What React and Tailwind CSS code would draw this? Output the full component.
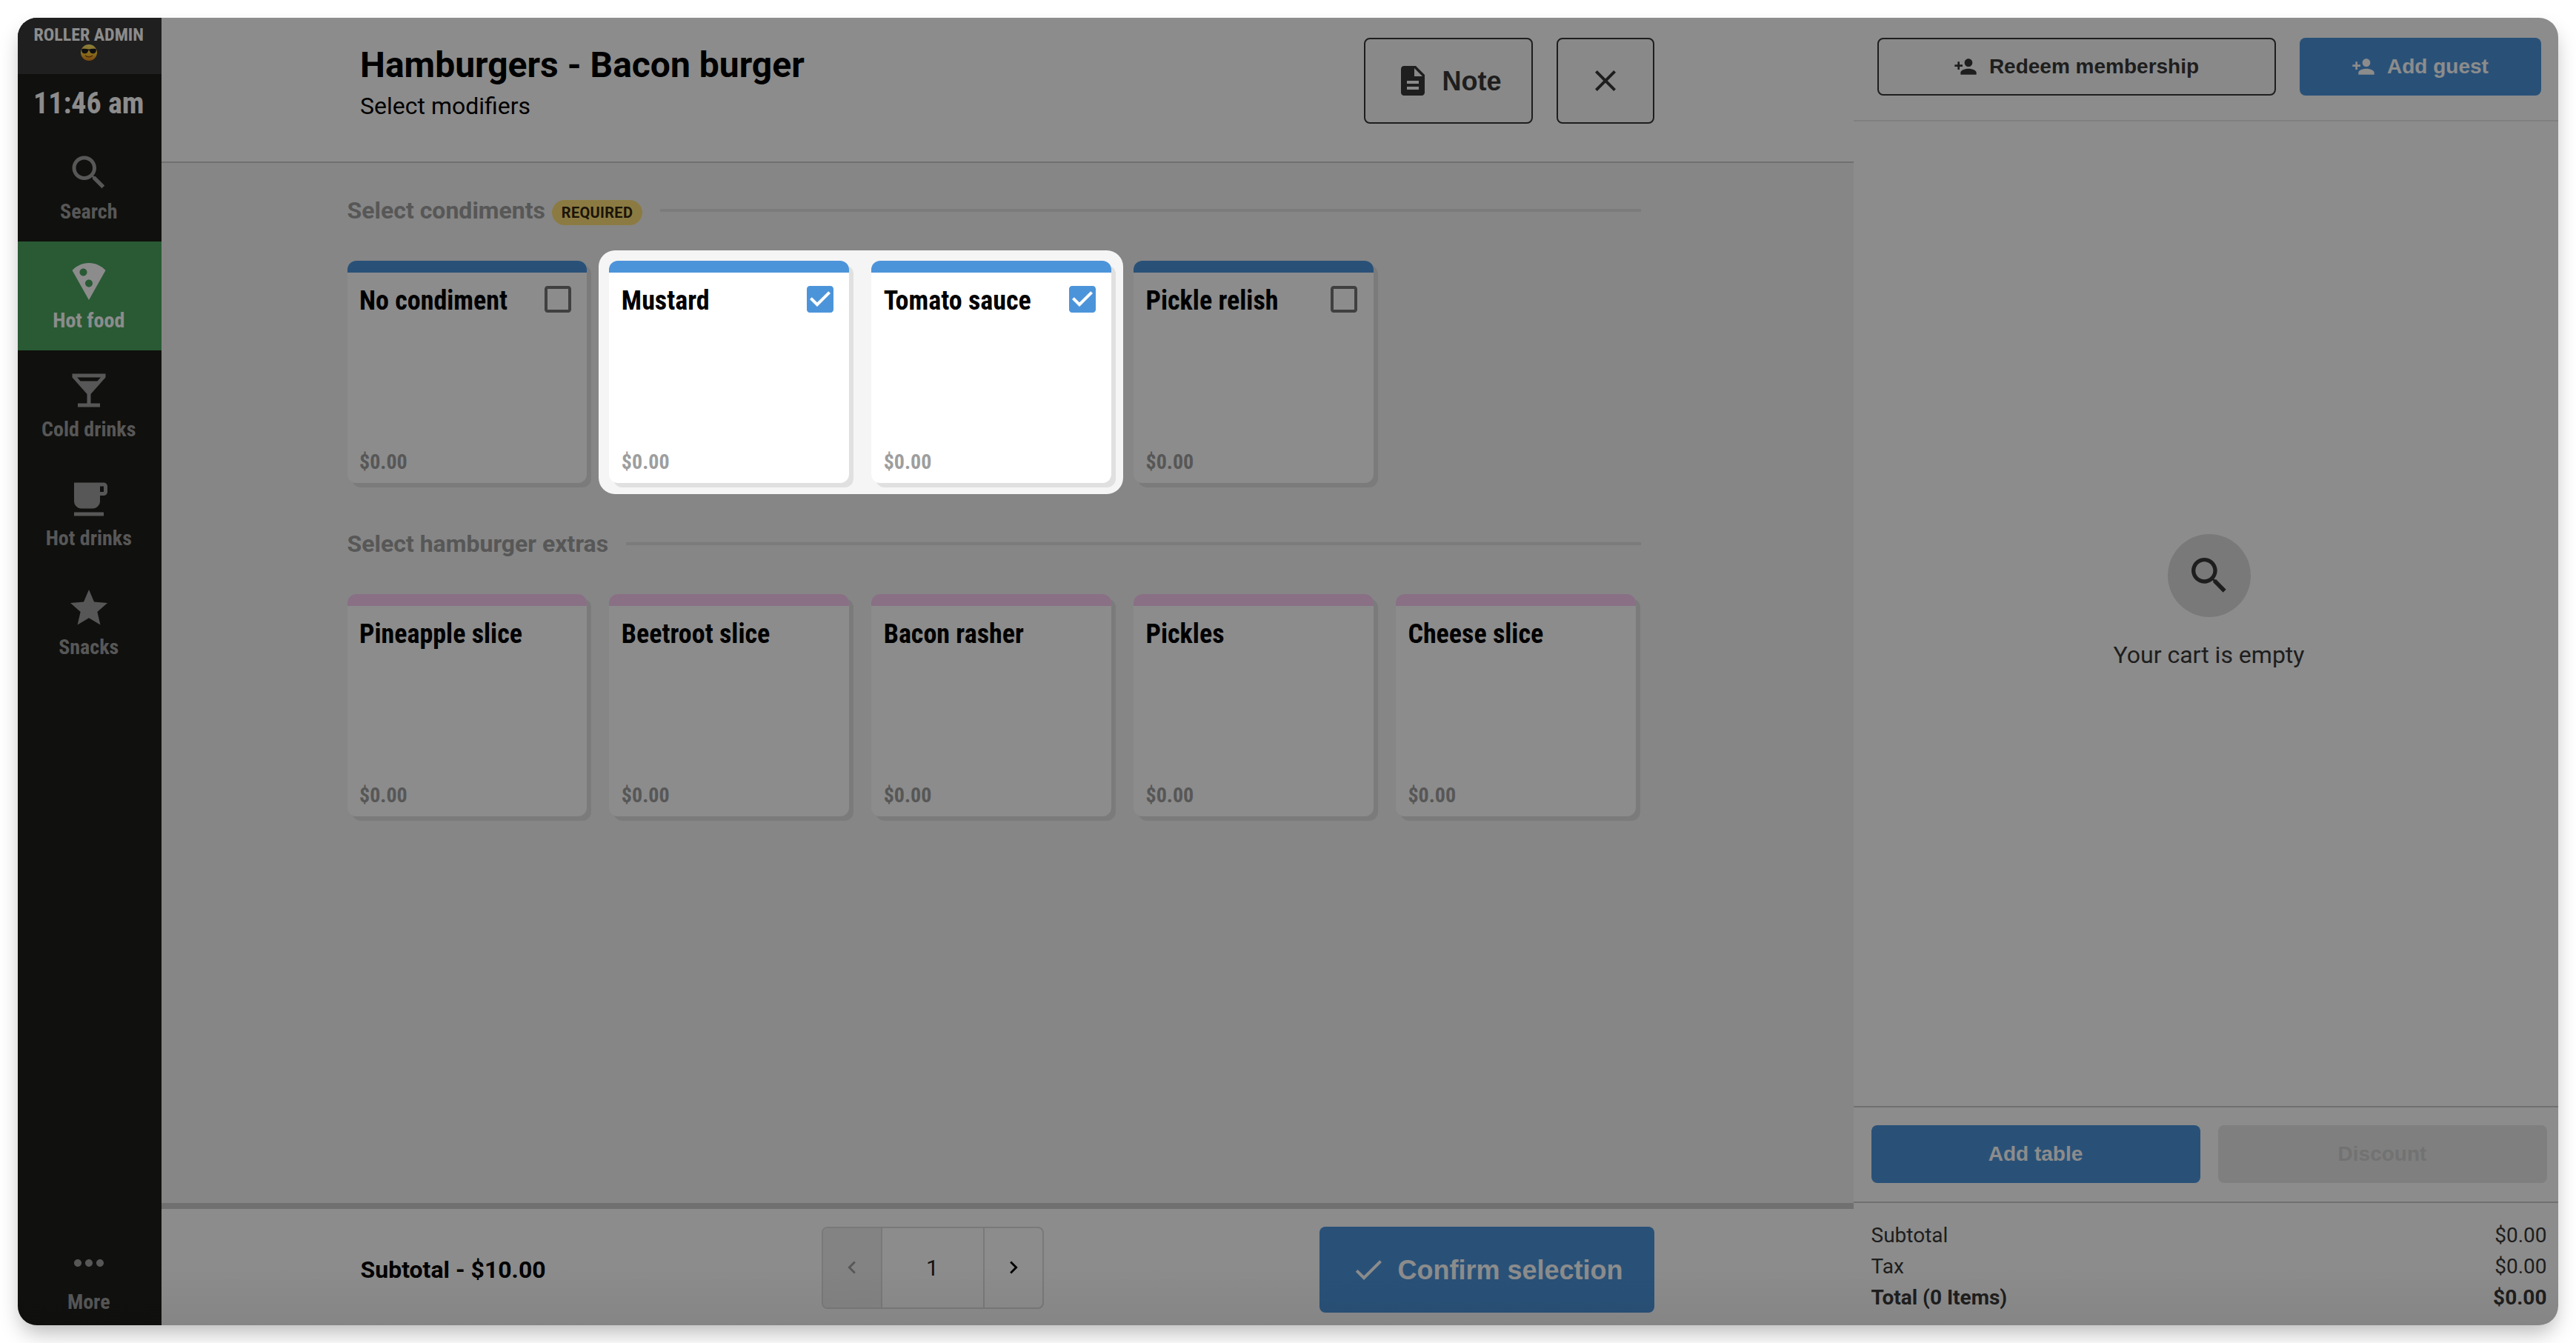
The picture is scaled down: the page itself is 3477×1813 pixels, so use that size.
import React from "react";

const PATHS = {
  search:
    "M15.5 14h-.79l-.28-.27C15.41 12.59 16 11.11 16 9.5 16 5.91 13.09 3 9.5 3S3 5.91 3 9.5 5.91 16 9.5 16c1.61 0 3.09-.59 4.23-1.57l.27.28v.79l5 4.99L20.49 19l-4.99-5zm-6 0C7.01 14 5 11.99 5 9.5S7.01 5 9.5 5 14 7.01 14 9.5 11.99 14 9.5 14z",
  pizza:
    "M12 2C8.43 2 5.23 3.54 3.01 6L12 22l8.99-16C18.78 3.55 15.57 2 12 2zM7 7c0-1.1.9-2 2-2s2 .9 2 2-.9 2-2 2-2-.9-2-2zm5 8c-1.1 0-2-.9-2-2s.9-2 2-2 2 .9 2 2-.9 2-2 2z",
  bar: "M21 5V3H3v2l8 9v5H6v2h12v-2h-5v-5l8-9zM7.43 7L5.66 5h12.69l-1.78 2H7.43z",
  cafe: "M20 3H4v10c0 2.21 1.79 4 4 4h6c2.21 0 4-1.79 4-4v-3h2c1.11 0 2-.89 2-2V5c0-1.11-.89-2-2-2zm0 5h-2V5h2v3zM4 19h16v2H4z",
  star: "M12 17.27L18.18 21l-1.64-7.03L22 9.24l-7.19-.61L12 2 9.19 8.63 2 9.24l5.46 4.73L5.82 21z",
  more: "M6 10c-1.1 0-2 .9-2 2s.9 2 2 2 2-.9 2-2-.9-2-2-2zm12 0c-1.1 0-2 .9-2 2s.9 2 2 2 2-.9 2-2-.9-2-2-2zm-6 0c-1.1 0-2 .9-2 2s.9 2 2 2 2-.9 2-2-.9-2-2-2z",
  note: "M14 2H6c-1.1 0-1.99.9-1.99 2L4 20c0 1.1.89 2 1.99 2H18c1.1 0 2-.9 2-2V8l-6-6zm2 16H8v-2h8v2zm0-4H8v-2h8v2zm-3-5V3.5L18.5 9H13z",
  close:
    "M19 6.41L17.59 5 12 10.59 6.41 5 5 6.41 10.59 12 5 17.59 6.41 19 12 13.41 17.59 19 19 17.59 13.41 12z",
  personAdd:
    "M15 12c2.21 0 4-1.79 4-4s-1.79-4-4-4-4 1.79-4 4 1.79 4 4 4zm-9-2V7H4v3H1v2h3v3h2v-3h3v-2H6zm9 4c-2.67 0-8 1.34-8 4v2h16v-2c0-2.66-5.33-4-8-4z",
  check: "M9 16.17L4.83 12l-1.42 1.41L9 19 21 7l-1.41-1.41z",
  left: "M15.41 7.41L14 6l-6 6 6 6 1.41-1.41L10.83 12z",
  right: "M10 6L8.59 7.41 13.17 12l-4.58 4.59L10 18l6-6z",
  boxOff:
    "M19 5v14H5V5h14m0-2H5c-1.1 0-2 .9-2 2v14c0 1.1.9 2 2 2h14c1.1 0 2-.9 2-2V5c0-1.1-.9-2-2-2z",
  boxOn:
    "M19 3H5c-1.11 0-2 .9-2 2v14c0 1.1.89 2 2 2h14c1.11 0 2-.9 2-2V5c0-1.1-.89-2-2-2zm-9 14l-5-5 1.41-1.41L10 14.17l7.59-7.59L19 8l-9 9z",
};

function Icon({ name, className }) {
  return (
    <svg viewBox="0 0 24 24" fill="currentColor" className={"shrink-0 " + className}>
      <path d={PATHS[name]} />
    </svg>
  );
}

function CoolFace() {
  return (
    <svg viewBox="0 0 22 22" className="h-[22px] w-[22px]">
      <defs>
        <linearGradient id="face" x1="0" y1="0" x2="0" y2="1">
          <stop offset="0" stopColor="#ffe873" />
          <stop offset="0.55" stopColor="#fbc533" />
          <stop offset="1" stopColor="#dd8420" />
        </linearGradient>
      </defs>
      <circle cx="11" cy="11" r="11" fill="url(#face)" />
      <path
        d="M1.2 6.2C4 5.4 8 5.6 11 6.8c3-1.2 7-1.4 9.8-.6.3 3.600-.8 6-4.300 6-3 0-4-1.600-4.600-3.700-.4-.6-1.400-.6-1.800 0-.6 2.100-1.600 3.700-4.600 3.700-3.500 0-4.600-2.400-4.300-6z"
        fill="#1c1c22"
      />
      <path d="M6.500 15.200c2.600 2.100 6.400 2.100 9 0" stroke="#7b4110" strokeWidth="1.300" fill="none" strokeLinecap="round" />
    </svg>
  );
}

function NavItem({ icon, label, active }) {
  return (
    <div
      className={
        "flex h-[147px] flex-col items-center pt-[24px] pr-[2px] " +
        (active ? "bg-[#4ba460] text-white" : "text-[#9e9e9e]")
      }
    >
      <Icon name={icon} className="h-[60px] w-[60px]" />
      <span className="mt-[5.500px] text-[28px] leading-[36px] font-bold whitespace-nowrap [font-stretch:75%]">
        {label}
      </span>
    </div>
  );
}

function Sidebar() {
  return (
    <nav className="flex w-[193.500px] shrink-0 flex-col bg-[#1e1e1b]">
      <div className="flex h-[75.500px] flex-col items-center bg-[#393939] pt-[8px] pr-[2px]">
        <span className="text-[24px] leading-[30px] font-bold whitespace-nowrap text-white [font-stretch:75%]">
          ROLLER ADMIN
        </span>
        <div className="-mt-[2px]">
          <CoolFace />
        </div>
      </div>
      <div className="flex h-[79px] items-center justify-center pt-[1px] pr-[2px] text-[40px] leading-[48px] font-bold text-white [font-stretch:75%]">
        11:46 am
      </div>
      <NavItem icon="search" label="Search" />
      <NavItem icon="pizza" label="Hot food" active />
      <NavItem icon="bar" label="Cold drinks" />
      <NavItem icon="cafe" label="Hot drinks" />
      <NavItem icon="star" label="Snacks" />
      <div className="mt-auto -mb-[8.500px]">
        <NavItem icon="more" label="More" />
      </div>
    </nav>
  );
}

function SectionHeading({ title, required }) {
  return (
    <div className="flex h-[40px] items-center">
      <h2 className="text-[32px] leading-[40px] font-bold whitespace-nowrap text-[#9e9e9e]">{title}</h2>
      {required && (
        <span className="mt-[6px] ml-[9px] flex h-[34px] w-[122px] shrink-0 items-center justify-center rounded-full bg-[#fde178] text-[20px] leading-[34px] font-bold tracking-[0.3px] text-[#33260f]">
          REQUIRED
        </span>
      )}
      <span className="ml-[24px] h-[4px] flex-1 bg-[#e0e0e0]" />
    </div>
  );
}

function Card({ title, bar, check }) {
  return (
    <div className="flex h-[300px] flex-col overflow-visible rounded-[12px] bg-white shadow-[6px_6px_0_#e0e0e0]">
      <div className={"h-[16.500px] shrink-0 rounded-t-[12px] " + bar} />
      <div className="flex flex-1 flex-col justify-between pt-[11.500px] pr-[15.500px] pb-[10px] pl-[16.500px]">
        <div className="flex items-start justify-between">
          <span className="pt-[4px] text-[36px] leading-[44px] font-bold whitespace-nowrap text-black [font-stretch:75%]">
            {title}
          </span>
          {check === "off" && <Icon name="boxOff" className="h-[48px] w-[48px] text-[#757575]" />}
          {check === "on" && <Icon name="boxOn" className="h-[48px] w-[48px] text-[#4c94da]" />}
        </div>
        <span className="text-[28px] leading-[36px] font-bold text-[#9e9e9e] [font-stretch:75%]">$0.00</span>
      </div>
    </div>
  );
}

const CONDIMENTS = [
  ["No condiment", "off"],
  ["Mustard", "on"],
  ["Tomato sauce", "on"],
  ["Pickle relish", "off"],
];
const EXTRAS = ["Pineapple slice", "Beetroot slice", "Bacon rasher", "Pickles", "Cheese slice"];

function Main() {
  return (
    <main className="flex w-[2284px] shrink-0 flex-col bg-[#f5f5f5]">
      <header className="flex h-[195.500px] shrink-0 items-start justify-between border-b-2 border-[#cccccc] bg-white pr-[269px] pl-[268.500px]">
        <div className="pt-[36px] text-black">
          <h1 className="text-[48px] leading-[56px] font-bold whitespace-nowrap">Hamburgers - Bacon burger</h1>
          <p className="mt-[6.500px] text-[32px] leading-[40px]">Select modifiers</p>
        </div>
        <div className="flex gap-[32px] pt-[27px] font-['Liberation_Sans',sans-serif] text-[#383838]">
          <button className="flex h-[116px] w-[228px] items-center rounded-[8px] border-2 border-[#383838] bg-[#f9f9f9] pl-[40px]">
            <Icon name="note" className="h-[48px] w-[48px]" />
            <span className="mt-[2px] ml-[16px] text-[36px] leading-[44px] font-bold">Note</span>
          </button>
          <button className="flex h-[116px] w-[132px] items-center justify-center rounded-[8px] border-2 border-[#383838] bg-[#f9f9f9]">
            <Icon name="close" className="h-[48px] w-[48px]" />
          </button>
        </div>
      </header>

      <div className="flex-1 pt-[44px] pl-[251px]">
        <section className="w-[1746px]">
          <SectionHeading title="Select condiments" required />
          <div className="mt-[48px] grid grid-cols-[repeat(5,323.850px)] gap-[30px]">
            {CONDIMENTS.map(([title, check]) => (
              <Card key={title} title={title} check={check} bar="bg-[#4c94da]" />
            ))}
          </div>
        </section>
        <section className="mt-[62px] w-[1746px]">
          <SectionHeading title="Select hamburger extras" />
          <div className="mt-[48px] grid grid-cols-[repeat(5,323.850px)] gap-[30px]">
            {EXTRAS.map((title) => (
              <Card key={title} title={title} bar="bg-[#f9ccf2]" />
            ))}
          </div>
        </section>
      </div>

      <footer className="flex h-[165.500px] shrink-0 items-start border-t-8 border-[#cccccc] bg-white pt-[24px] pr-[269px] pl-[269px]">
        <div className="w-[622px] pt-[38px] text-[32px] leading-[40px] font-bold text-black">Subtotal - $10.00</div>
        <div className="flex h-[111px] w-[300px] overflow-hidden rounded-[8px] border-2 border-[#dcdcdc] text-[32px] text-black">
          <div className="flex w-[80px] items-center justify-center border-r-2 border-[#dcdcdc] bg-[#eeeeee] text-[#9e9e9e]">
            <Icon name="left" className="h-[34px] w-[34px]" />
          </div>
          <div className="flex flex-1 items-center justify-center pt-[1px] text-[30px] text-[#222222]">1</div>
          <div className="flex w-[80px] items-center justify-center border-l-2 border-[#dcdcdc]">
            <Icon name="right" className="h-[34px] w-[34px]" />
          </div>
        </div>
        <button className="ml-auto flex h-[116px] w-[452px] items-center rounded-[8px] bg-[#4c94da] pl-[42px] font-['Liberation_Sans',sans-serif] text-white">
          <Icon name="check" className="h-[48px] w-[48px]" />
          <span className="mt-[2px] ml-[16px] text-[36px] leading-[44px] font-bold whitespace-nowrap">Confirm selection</span>
        </button>
      </footer>
    </main>
  );
}

function CartPanel() {
  return (
    <aside className="flex w-[960px] shrink-0 flex-col bg-white text-[#383838]">
      <div className="flex h-[139.500px] shrink-0 gap-[32px] border-b-2 border-[#e8e8e8] pt-[27px] pr-[32px] pl-[32px] font-['Liberation_Sans',sans-serif] text-[28px] leading-[36px] font-bold">
        <button className="flex h-[78px] w-[538px] items-center justify-center rounded-[8px] border-2 border-[#383838] bg-[#f9f9f9]">
          <Icon name="personAdd" className="h-[32px] w-[32px]" />
          <span className="ml-[16px]">Redeem membership</span>
        </button>
        <button className="flex h-[78px] flex-1 items-center justify-center rounded-[8px] bg-[#4c94da] text-white">
          <Icon name="personAdd" className="h-[32px] w-[32px]" />
          <span className="ml-[16px]">Add guest</span>
        </button>
      </div>
      <div className="flex flex-1 flex-col items-center pt-[557.500px]">
        <div className="flex h-[112px] w-[112px] items-center justify-center rounded-full bg-[#dcdcdc]">
          <Icon name="search" className="h-[64px] w-[64px]" />
        </div>
        <p className="mt-[31px] text-[32px] leading-[40px]">Your cart is empty</p>
      </div>
      <div className="flex h-[128.500px] shrink-0 gap-[24px] border-t-2 border-[#cccccc] px-[24px] pt-[24px] font-['Liberation_Sans',sans-serif] text-[28px] font-bold">
        <button className="h-[78px] flex-1 rounded-[8px] bg-[#4c94da] text-white">Add table</button>
        <button className="h-[78px] flex-1 rounded-[8px] bg-[#e7e7e7] text-[#d0d0d0]">Discount</button>
      </div>
      <div className="h-[167.500px] shrink-0 border-t-2 border-[#cccccc] px-[24px] pt-[23px] text-[28px] leading-[42px]">
        <div className="flex justify-between">
          <span>Subtotal</span>
          <span>$0.00</span>
        </div>
        <div className="flex justify-between">
          <span>Tax</span>
          <span>$0.00</span>
        </div>
        <div className="flex justify-between font-bold">
          <span>Total (0 Items)</span>
          <span>$0.00</span>
        </div>
      </div>
    </aside>
  );
}

export default function App() {
  return (
    <div className="h-[1813px] w-[3477px] overflow-hidden bg-white p-[24px] font-[Roboto,sans-serif]">
      <div className="rounded-[26px] shadow-[0_14px_28px_-4px_rgba(0,0,0,0.28)]">
        <div className="relative flex h-[1765px] w-[3429px] overflow-hidden rounded-[26px]">
          <Sidebar />
          <Main />
          <CartPanel />
          {/* spotlight over the selected condiments; its spread shadow dims the rest */}
          <div className="absolute top-[314px] left-[784px] h-[329px] w-[708px] rounded-[22px] shadow-[0_0_0_4000px_rgba(0,0,0,0.45)]" />
          <div className="absolute inset-x-0 bottom-0 h-[80px] bg-gradient-to-b from-transparent to-black/5" />
        </div>
      </div>
    </div>
  );
}
